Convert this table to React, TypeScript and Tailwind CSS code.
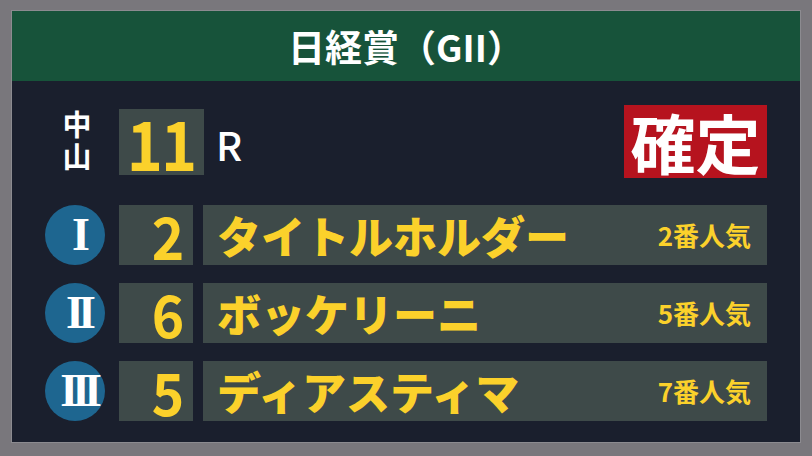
import React from "react";

const jp = { fontFamily: '"Noto Sans CJK JP", "Noto Sans", sans-serif' };
const serif = { fontFamily: '"Liberation Serif", "DejaVu Serif", serif' };

const results = [
  { rank: "I", num: "2", name: "タイトルホルダー", pop: "2番人気" },
  { rank: "II", num: "6", name: "ボッケリーニ", pop: "5番人気" },
  { rank: "III", num: "5", name: "ディアスティマ", pop: "7番人気" },
];

function ResultRow({ rank, num, name, pop }: (typeof results)[number]) {
  return (
    <div className="flex items-center h-[60px]">
      <div className="w-[60px] h-[60px] rounded-full bg-[#1e6690] flex items-center justify-center">
        <span
          className="text-white font-bold text-[46px] leading-none tracking-[-6px] mr-[-6px]"
          style={serif}
        >
          {rank}
        </span>
      </div>
      <div className="ml-[14px] w-[74px] h-full bg-[#3e4a49] flex items-center justify-end pr-[8px]">
        <span className="text-[#fbd12b] font-bold text-[58px] leading-[58px] scale-x-95" style={jp}>
          {num}
        </span>
      </div>
      <div className="ml-[10px] flex-1 h-full bg-[#3e4a49] flex items-center justify-between pl-[14px] pr-[16px]">
        <span className="text-[#fbd12b] font-black text-[44px] leading-none" style={jp}>
          {name}
        </span>
        <span className="text-[#fbd12b] font-bold text-[26px] leading-none" style={jp}>
          {pop}
        </span>
      </div>
    </div>
  );
}

export default function App() {
  return (
    <div className="w-[812px] h-[456px] bg-[#79777c] pt-[11px] px-[12px] pb-[14px]">
      <div className="h-full flex flex-col bg-[#1a1f2d] outline outline-1 outline-[#8c8b90]">
        <div className="h-[70px] bg-[#17533a] flex items-center justify-center">
          <span className="text-white font-bold text-[37px] leading-none" style={jp}>
            日経賞（GII）
          </span>
        </div>
        <div className="flex-1 pt-[24px] px-[33px]">
          <div className="flex items-center h-[73px]">
            <div className="w-[60px] flex justify-center pl-[3px]">
              <span
                className="text-white font-bold text-[29px] leading-none tracking-[3px] [writing-mode:vertical-rl]"
                style={jp}
              >
                中山
              </span>
            </div>
            <div className="ml-[14px] w-[85px] h-[66px] bg-[#3e4a49] flex items-center justify-center">
              <span
                className="text-[#fbd12b] font-bold text-[68px] leading-none tracking-[-2px] scale-x-90"
                style={jp}
              >
                11
              </span>
            </div>
            <span className="ml-[12px] mt-[4px] text-white font-medium text-[40px] leading-none" style={jp}>
              R
            </span>
            <div className="ml-auto w-[143px] h-[73px] bg-[#b6131e] flex items-center justify-center">
              <span className="text-white font-bold text-[65px] leading-none" style={jp}>
                確定
              </span>
            </div>
          </div>
          <div className="mt-[27px] flex flex-col gap-[18px]">
            {results.map((r) => (
              <ResultRow key={r.rank} {...r} />
            ))}
          </div>
        </div>
      </div>
    </div>
  );
}
